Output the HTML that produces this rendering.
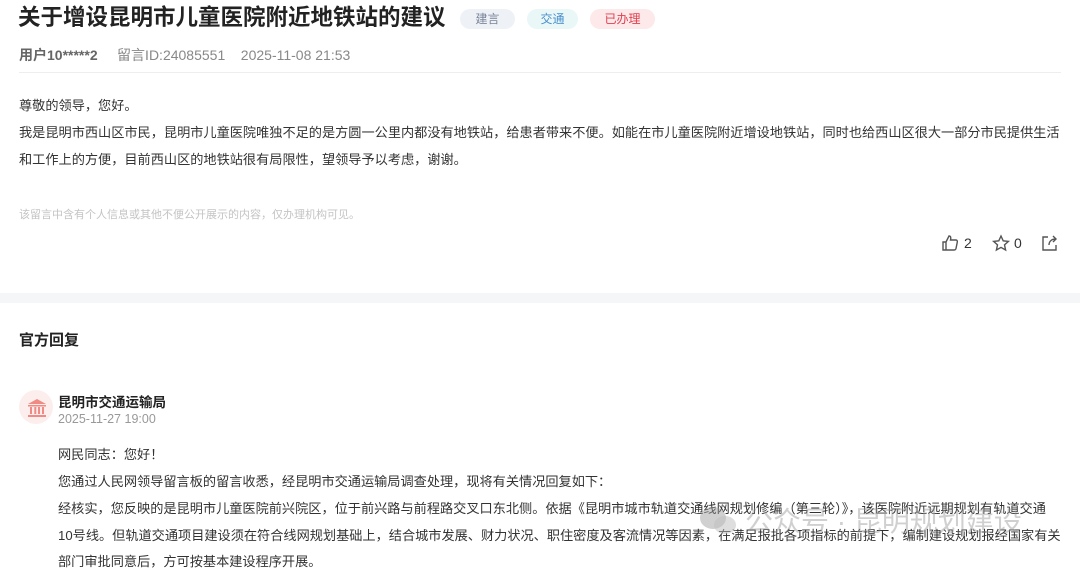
<!DOCTYPE html>
<html><head><meta charset="utf-8"><style>
body{margin:0;width:1080px;height:571px;overflow:hidden;background:#fff;font-family:"Liberation Sans","Noto Sans CJK SC",sans-serif;color:#333;position:relative}
.a{position:absolute;white-space:nowrap}
.tag{position:absolute;top:9px;height:20px;line-height:20px;border-radius:10px;font-size:12px;text-align:center}
.p{position:absolute;left:19px;font-size:13.18px;color:#333;white-space:nowrap}
</style></head><body>
<div class="a" style="left:18px;top:3px;font-size:22.5px;font-weight:bold;color:#222;line-height:30px">关于增设昆明市儿童医院附近地铁站的建议</div>
<div class="tag" style="left:460px;width:55px;background:#eef1f6;color:#7a8699">建言</div>
<div class="tag" style="left:527px;width:51px;background:#e9f7f6;color:#4a8fd0">交通</div>
<div class="tag" style="left:590px;width:65px;background:#fde8ea;color:#e0404f">已办理</div>
<div class="a" style="left:19px;top:46px;font-size:14px;line-height:18px;color:#888"><b style="color:#666">用户10*****2</b>&nbsp;&nbsp;&nbsp;&nbsp;&nbsp;留言ID:24085551&nbsp;&nbsp;&nbsp;&nbsp;2025-11-08 21:53</div>
<div class="a" style="left:19px;right:19px;top:72px;height:1px;background:#eee"></div>
<div class="p" style="top:95px">尊敬的领导，您好。</div>
<div class="p" style="top:122px">我是昆明市西山区市民，昆明市儿童医院唯独不足的是方圆一公里内都没有地铁站，给患者带来不便。如能在市儿童医院附近增设地铁站，同时也给西山区很大一部分市民提供生活</div>
<div class="p" style="top:149px">和工作上的方便，目前西山区的地铁站很有局限性，望领导予以考虑，谢谢。</div>
<div class="a" style="left:19px;top:206px;font-size:11px;color:#c4c4c4">该留言中含有个人信息或其他不便公开展示的内容，仅办理机构可见。</div>
<svg class="a" style="left:941px;top:234px" width="120" height="18" viewBox="0 0 120 18" fill="none" stroke="#555" stroke-width="1.4">
<path d="M2 8h3v8H2z M5 8l3-6c2 0 2 2 1.5 4H15c1 0 1.5 1 1.3 2l-1.3 6.5c-.2.8-.8 1.5-1.8 1.5H5"/>
<path d="M60 2l2.2 4.8 5.2.6-3.9 3.5 1.1 5.1L60 13.4 55.4 16l1.1-5.1-3.9-3.5 5.2-.6z"/>
<path d="M107 3h-5v13h13v-5 M108 11c0-4 3-6 7-6 M112 2l3 3-3 3"/>
<text x="23" y="14" fill="#333" stroke="none" font-size="14" font-family="Liberation Sans">2</text>
<text x="73" y="14" fill="#333" stroke="none" font-size="14" font-family="Liberation Sans">0</text>
</svg>
<div class="a" style="left:0;top:293px;width:1080px;height:10px;background:#f5f6f8"></div>
<div class="a" style="left:19px;top:329px;font-size:15px;font-weight:bold;color:#222">官方回复</div>
<div class="a" style="left:19px;top:390px;width:34px;height:34px;border-radius:50%;background:#fdeeee"></div>
<svg class="a" style="left:26px;top:398px" width="22" height="20" viewBox="0 0 22 20" fill="#ef8a84"><path d="M11 1L2 6h18z"/><rect x="2" y="7" width="18" height="1.5"/><rect x="4" y="9" width="2" height="7"/><rect x="8.3" y="9" width="2" height="7"/><rect x="12" y="9" width="2" height="7"/><rect x="16" y="9" width="2" height="7"/><rect x="2" y="17" width="18" height="2"/></svg>
<div class="a" style="left:58px;top:391px;font-size:13.5px;font-weight:bold;color:#222">昆明市交通运输局</div>
<div class="a" style="left:58px;top:412px;font-size:12.5px;color:#999">2025-11-27 19:00</div>
<div class="p" style="left:58px;top:444px">网民同志：您好！</div>
<div class="p" style="left:58px;top:471px">您通过人民网领导留言板的留言收悉，经昆明市交通运输局调查处理，现将有关情况回复如下：</div>
<div class="p" style="left:58px;top:498px">经核实，您反映的是昆明市儿童医院前兴院区，位于前兴路与前程路交叉口东北侧。依据《昆明市城市轨道交通线网规划修编（第三轮）》，该医院附近远期规划有轨道交通</div>
<div class="p" style="left:58px;top:525px">10号线。但轨道交通项目建设须在符合线网规划基础上，结合城市发展、财力状况、职住密度及客流情况等因素，在满足报批各项指标的前提下，编制建设规划报经国家有关</div>
<div class="p" style="left:58px;top:551px">部门审批同意后，方可按基本建设程序开展。</div>
<div class="a" style="left:745px;top:500px;font-size:28px;color:rgba(150,150,150,0.45)">公众号 · 昆明规划建设</div>
<svg class="a" style="left:698px;top:505px" width="40" height="32" viewBox="0 0 40 32" fill="rgba(150,150,150,0.45)"><ellipse cx="15" cy="13" rx="13" ry="11"/><ellipse cx="27" cy="20" rx="11" ry="9" fill="rgba(190,190,190,0.5)"/></svg>
</body></html>
